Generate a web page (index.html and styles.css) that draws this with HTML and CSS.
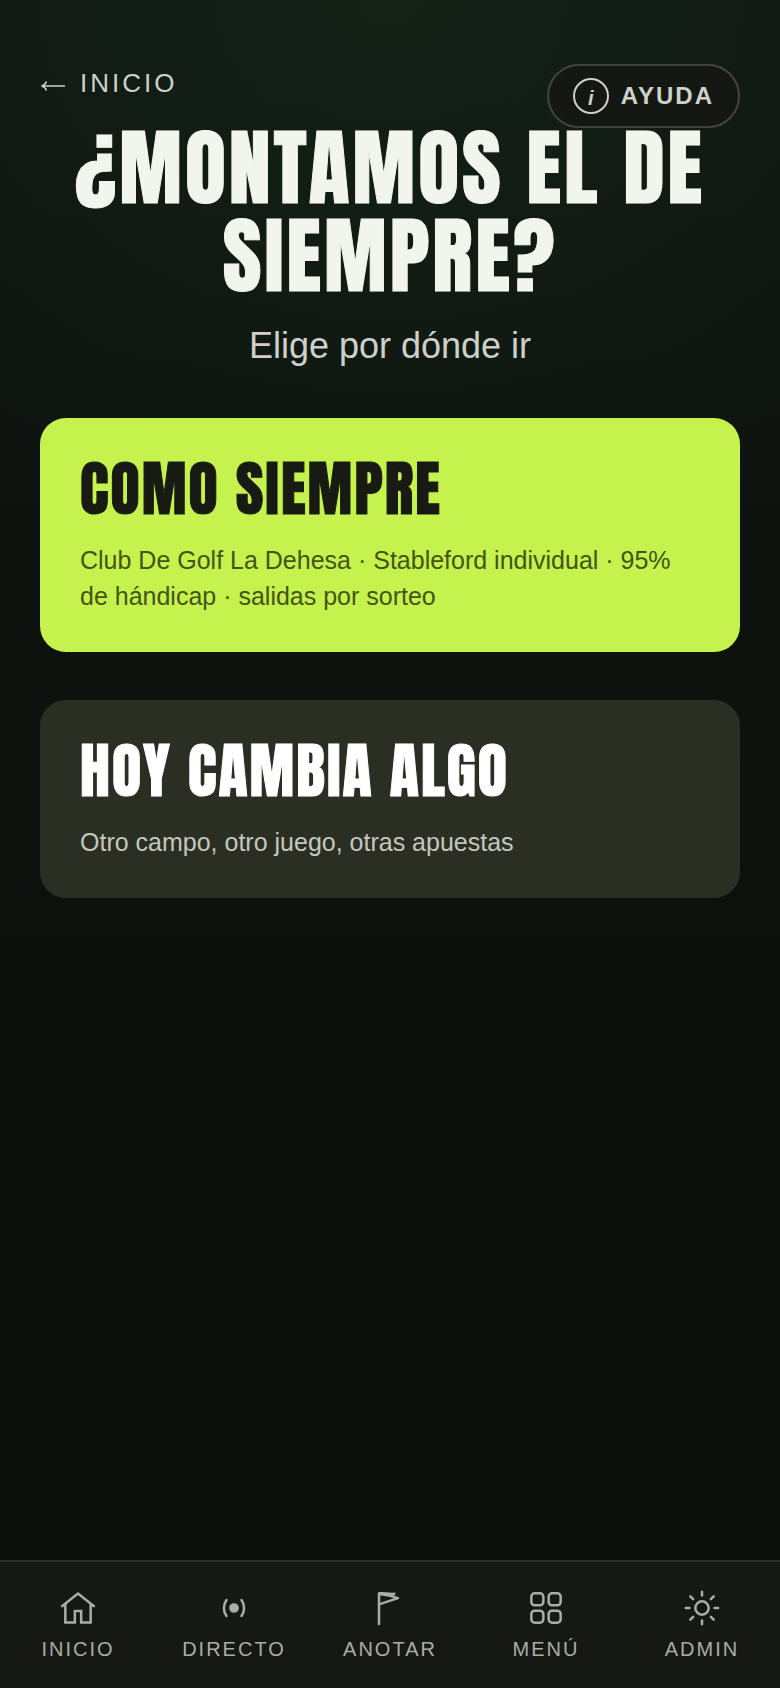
FILE: index.html
```html
<!DOCTYPE html>
<html lang="es">
<head>
<meta charset="utf-8">
<meta name="viewport" content="width=device-width, initial-scale=1">
<title>¿Montamos el de siempre?</title>
<link rel="stylesheet" href="styles.css">
</head>
<body>
<div class="app">
  <header class="topbar">
    <a class="back" href="#">
      <svg class="back-arrow" viewBox="0 0 26 18" aria-hidden="true"><path d="M25 12H2M6.500 7.500C5.500 10 4 11.500 1.500 12c2.500.500 4 2 5 4.500"/></svg>
      <span>INICIO</span>
    </a>
    <button class="help" type="button">
      <span class="help-mark" aria-hidden="true">i</span>
      <span>AYUDA</span>
    </button>
  </header>

  <main class="content">
    <h1 class="title">¿MONTAMOS EL DE SIEMPRE?</h1>
    <p class="subtitle">Elige por dónde ir</p>
    <div class="options">
      <button class="card card-primary" type="button">
        <span class="card-title">COMO SIEMPRE</span>
        <span class="card-text">Club De Golf La Dehesa · Stableford individual · 95% de hándicap · salidas por sorteo</span>
      </button>
      <button class="card card-secondary" type="button">
        <span class="card-title">HOY CAMBIA ALGO</span>
        <span class="card-text">Otro campo, otro juego, otras apuestas</span>
      </button>
    </div>
  </main>

  <nav class="tabs" aria-label="Principal">
    <a class="tab" href="#">
      <svg class="icon icon-sharp" viewBox="0 0 24 24" aria-hidden="true"><path d="M2 11.200 12 3.300l10 7.900M4.400 9.600v11.100h5.700v-6.900h3.800v6.900h5.700V9.600"/></svg>
      <span>INICIO</span>
    </a>
    <a class="tab" href="#">
      <svg class="icon" viewBox="0 0 24 24" aria-hidden="true"><circle class="dot" cx="12" cy="12" r="2.900"/><path d="M7.500 7.200a8.200 8.200 0 0 0 0 9.600M16.500 7.200a8.200 8.200 0 0 1 0 9.600"/></svg>
      <span>DIRECTO</span>
    </a>
    <a class="tab" href="#">
      <svg class="icon" viewBox="0 0 24 24" aria-hidden="true"><path d="M5.400 21.600V3.200c3-.5 5.500.7 9.200.3l-2.400 1.200 4.600 1.400L5.400 9.800M6 3.600l6.200 1.100"/></svg>
      <span>ANOTAR</span>
    </a>
    <a class="tab" href="#">
      <svg class="icon" viewBox="0 0 24 24" aria-hidden="true"><rect x="3.200" y="3.200" width="7.200" height="7.200" rx="2"/><rect x="13.600" y="3.200" width="7.200" height="7.200" rx="2"/><rect x="3.200" y="13.600" width="7.200" height="7.200" rx="2"/><rect x="13.600" y="13.600" width="7.200" height="7.200" rx="2"/></svg>
      <span>MENÚ</span>
    </a>
    <a class="tab" href="#">
      <svg class="icon" viewBox="0 0 24 24" aria-hidden="true"><circle cx="12" cy="12" r="4"/><path d="M12 2.300v2.200M12 19.500v2.200M2.300 12h2.200M19.500 12h2.200M5 5l1.700 1.700M17.300 17.300 19 19M5 19l1.700-1.700M17.300 6.700 19 5"/></svg>
      <span>ADMIN</span>
    </a>
  </nav>
</div>
</body>
</html>
```
FILE: styles.css
```css
* {
  box-sizing: border-box;
}

body {
  margin: 0;
  background: #0d0f0c;
  color: #f2f4ee;
  font-family: "Liberation Sans", Arial, sans-serif;
}

.app {
  position: relative;
  display: flex;
  flex-direction: column;
  min-height: 100vh;
  background:
    radial-gradient(ellipse 90% 34% at 50% 0, #132117, transparent),
    linear-gradient(#101611, #0d0f0c 60%);
}

.topbar {
  display: flex;
  padding: 67px 40px 0;
}

.back {
  display: flex;
  align-items: center;
  gap: 14px;
  color: #cdd1ca;
  font-size: 26px;
  line-height: 32px;
  letter-spacing: 3px;
  text-decoration: none;
}

.back-arrow {
  width: 26px;
  height: 18px;
  fill: none;
  stroke: currentColor;
  stroke-width: 1.500;
}

/* Floats over the heading */
.help {
  position: absolute;
  top: 64px;
  right: 40px;
  z-index: 1;
  display: flex;
  align-items: center;
  gap: 12px;
  height: 64px;
  padding: 0 24px;
  border: 2px solid #42453f;
  border-radius: 32px;
  background: #151712;
  color: #cdd1ca;
  font: bold 24px/28px "Liberation Sans", Arial, sans-serif;
  letter-spacing: 2px;
}

.help-mark {
  width: 36px;
  height: 36px;
  border: 2px solid currentColor;
  border-radius: 50%;
  font-size: 20px;
  line-height: 36px;
  font-style: italic;
  letter-spacing: 0;
  text-align: center;
}

.content {
  flex: 1;
  padding: 25px 40px 48px;
}

.title,
.card-title {
  font-family: Anton, "Liberation Sans Narrow", "DejaVu Sans Condensed", sans-serif;
  font-weight: 400;
  -webkit-text-stroke: 1px currentColor;
}

.title {
  margin: 0;
  font-size: 84px;
  line-height: 88px;
  letter-spacing: 3px;
  text-align: center;
}

.subtitle {
  margin: 24px 0 0;
  color: #cdd1ca;
  font-size: 36px;
  line-height: 44px;
  text-align: center;
}

.options {
  display: flex;
  flex-direction: column;
  gap: 48px;
  margin-top: 50px;
}

.card {
  display: flex;
  flex-direction: column;
  gap: 22px;
  width: 100%;
  padding: 40px 40px 38px;
  border: 0;
  border-radius: 26px;
  font: 25px/36px "Liberation Sans", Arial, sans-serif;
  text-align: left;
}

.card-title {
  font-size: 60px;
  line-height: 62px;
  letter-spacing: 2px;
}

.card-primary {
  background: #c6f24e;
  color: #181b13;
}

.card-primary .card-text {
  color: #435516;
}

.card-secondary {
  background: #2b2f23;
  color: #ffffff;
}

.card-secondary .card-text {
  color: #c3c7bf;
}

.tabs {
  position: sticky;
  bottom: 0;
  display: grid;
  grid-template-columns: repeat(5, 1fr);
  padding: 26px 0;
  border-top: 2px solid #2d302b;
  background: #151813;
}

.tab {
  display: flex;
  flex-direction: column;
  align-items: center;
  gap: 9px;
  color: #a9ada5;
  font-size: 20px;
  line-height: 25px;
  letter-spacing: 2px;
  text-decoration: none;
}

.icon {
  width: 40px;
  height: 40px;
  fill: none;
  stroke: currentColor;
  stroke-width: 1.500;
  stroke-linecap: round;
  stroke-linejoin: round;
}

.icon-sharp {
  stroke-linecap: butt;
  stroke-linejoin: miter;
}

.icon .dot {
  fill: currentColor;
  stroke: none;
}
```
